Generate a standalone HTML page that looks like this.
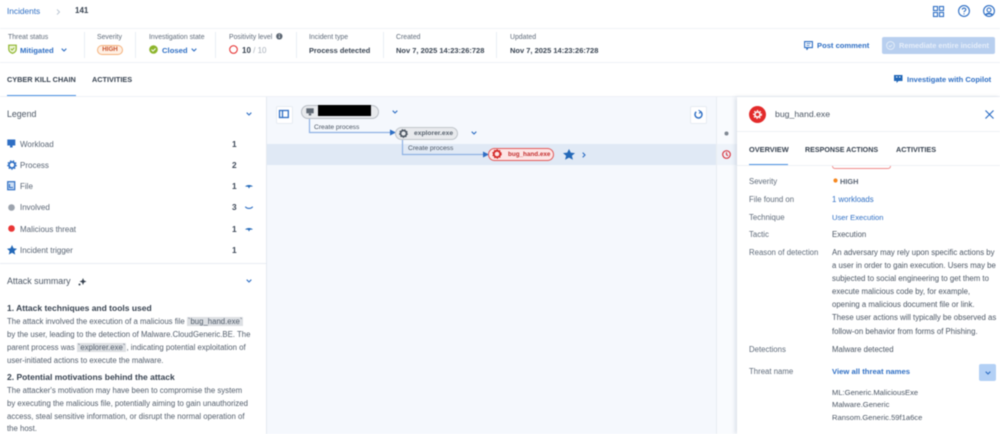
<!DOCTYPE html>
<html><head><meta charset="utf-8">
<style>
html,body{margin:0;padding:0;background:#fff}
#p{position:relative;width:1000px;height:434px;overflow:hidden;background:#fff;font-family:"Liberation Sans",sans-serif;color:#3b4656;filter:blur(.4px)}
#p div{position:absolute}
.t{white-space:nowrap;font-size:8px;line-height:14px}
.l{color:#5f6b7a;font-size:6.9px}
.b{color:#2f6fc4}
.v{color:#3a4553;font-weight:bold;font-size:7.5px}
.h{font-weight:bold;color:#36414f;font-size:7.3px}
.sep{width:1px;height:26px;top:32px;background:#e9eef5}
.k{color:#5f6b7a;font-size:7.8px}
.r{color:#4b5664;font-size:7.8px}
.e{color:#5a6574;font-size:8px}
.n{font-size:8.3px;font-weight:bold;left:232px}
.s{color:#525d6b;font-size:7.8px;left:7px}
.g{color:#36414f;font-weight:bold;font-size:8.5px;left:7px}
.code{background:#dcdfe3;padding:0 1px}
svg{position:absolute;overflow:visible}
</style></head><body><div id="p">

<!-- top -->
<div class="t b" style="left:7px;top:4px;font-size:8.3px">Incidents</div>
<svg style="left:56px;top:9px" width="5" height="6" fill="none" stroke="#bcc7d4"><path d="M1 .5L3.500 3 1 5.500"/></svg>
<div class="t" style="left:75px;top:4px;font-size:8px;font-weight:bold;color:#36414f">141</div>
<svg style="left:933px;top:6px" width="11" height="11" fill="none" stroke="#2f6fc4" stroke-width="1.100"><rect x=".5" y=".5" width="4" height="4"/><rect x="6.500" y=".5" width="4" height="4"/><rect x=".5" y="6.500" width="4" height="4"/><rect x="6.500" y="6.500" width="4" height="4"/></svg>
<svg style="left:958px;top:5px" width="12" height="12" fill="none" stroke="#2f6fc4" stroke-width="1.100"><circle cx="6" cy="6" r="5.400"/><path d="M4.300 4.600C4.400 2.600 7.800 2.600 7.800 4.600 7.800 6 6 5.800 6 7.300"/><path d="M6 8.400v1"/></svg>
<svg style="left:983px;top:5px" width="12" height="12" fill="none" stroke="#2f6fc4" stroke-width="1.100"><circle cx="6" cy="6" r="5.400"/><circle cx="6" cy="5" r="2"/><path d="M2.800 9.800C4 8.200 8 8.200 9.200 9.800" stroke-width="1.600"/></svg>

<div style="left:0;top:28px;width:1000px;height:1px;background:#f0f3f7"></div>
<div style="left:0;top:62px;width:1000px;height:1px;background:#eef1f6"></div>

<!-- status row -->
<div class="t l" style="left:8px;top:31px">Threat status</div>
<svg style="left:8px;top:44px" width="9" height="10" fill="#eef5d8" stroke="#8db52c" stroke-width="1.200"><path d="M.8 1.200h7.400v4.200C8.200 7.400 6 8.800 4.500 9.300 3 8.800.8 7.400.8 5.400z"/><path d="M2.800 4.700l1.300 1.300 2.200-2.300" stroke-width="1" fill="none"/></svg>
<div class="t b" style="left:20px;top:44px;font-weight:bold;font-size:7.700px">Mitigated</div>
<svg style="left:61px;top:48px" width="6" height="4" fill="none" stroke="#2f6fc4" stroke-width="1.100"><path d="M.7.7L3 3 5.300.7"/></svg>
<div class="sep" style="left:84px"></div>

<div class="t l" style="left:97px;top:31px">Severity</div>
<div class="t" style="left:97px;top:45px;width:24px;height:8px;border:1px solid #f5b27c;border-radius:5px;background:#fff0e4;color:#c8502a;font-size:6.200px;font-weight:bold;line-height:8px;text-align:center">HIGH</div>
<div class="sep" style="left:135px"></div>

<div class="t l" style="left:149px;top:31px">Investigation state</div>
<svg style="left:149px;top:45px" width="9" height="9"><circle cx="4.500" cy="4.500" r="4.300" fill="#8db52c"/><path d="M2.500 4.600l1.500 1.500 2.600-2.600" fill="none" stroke="#fff" stroke-width="1"/></svg>
<div class="t b" style="left:162px;top:44px;font-weight:bold;font-size:7.700px">Closed</div>
<svg style="left:191px;top:48px" width="6" height="4" fill="none" stroke="#2f6fc4" stroke-width="1.100"><path d="M.7.7L3 3 5.300.7"/></svg>
<div class="sep" style="left:215px"></div>

<div class="t l" style="left:229px;top:31px">Positivity level</div>
<svg style="left:276px;top:33px" width="7" height="7"><circle cx="3.300" cy="3.300" r="3.200" fill="#5c6672"/><path d="M3.300 3v2M3.300 1.300v1" stroke="#fff" stroke-width=".9"/></svg>
<svg style="left:229px;top:45px" width="9" height="9" fill="none" stroke="#e63a3a" stroke-width="1.100"><circle cx="4.500" cy="4.500" r="3.800"/></svg>
<div class="t" style="left:242px;top:44px;font-size:8px;font-weight:bold;color:#36414f">10 <span style="color:#aab2bc;font-weight:normal">/ 10</span></div>
<div class="sep" style="left:296px"></div>

<div class="t l" style="left:309px;top:31px">Incident type</div>
<div class="t v" style="left:309px;top:44px;font-size:7.400px">Process detected</div>
<div class="sep" style="left:383px"></div>

<div class="t l" style="left:396px;top:31px">Created</div>
<div class="t v" style="left:396px;top:44px">Nov 7, 2025 14:23:26:728</div>
<div class="sep" style="left:496px"></div>

<div class="t l" style="left:510px;top:31px">Updated</div>
<div class="t v" style="left:510px;top:44px">Nov 7, 2025 14:23:26:728</div>

<svg style="left:804px;top:41px" width="9" height="10" fill="none" stroke="#2f6fc4" stroke-width="1.100"><path d="M.6.6h7.800v6H4L2.800 8.800V6.600H.6z"/><path d="M2.500 2.500h4M2.500 4.500h3" stroke-width=".8"/></svg>
<div class="t b" style="left:817px;top:39px;font-weight:bold;font-size:7.600px">Post comment</div>
<div style="left:882px;top:37px;width:113px;height:17px;background:#b8cfef;border-radius:2px"></div>
<svg style="left:886px;top:41px" width="9" height="9" fill="none" stroke="#e2ecf8"><circle cx="4.500" cy="4.500" r="3.900"/><path d="M2.900 4.600l1.200 1.200 2-2"/></svg>
<div class="t" style="left:899px;top:39px;color:#e6eefa;font-weight:bold;font-size:7.400px">Remediate entire incident</div>

<!-- tabs -->
<div class="t h" style="left:7px;top:73px">CYBER KILL CHAIN</div>
<div class="t h" style="left:92px;top:73px">ACTIVITIES</div>
<div style="left:7px;top:95px;width:69px;height:2px;background:#4a90e2"></div>
<svg style="left:894px;top:74px" width="9" height="10"><path d="M0 1h8.500v6H4.500L2.500 9V7H0z" fill="#2368b8"/><path d="M2 3h1.500M5 3h1.500" stroke="#fff"/></svg>
<div class="t b" style="left:907px;top:73px;font-weight:bold;font-size:7.500px">Investigate with Copilot</div>
<div style="left:0;top:96px;width:1000px;height:1px;background:#eef1f6"></div>

<!-- canvas -->
<div style="left:267px;top:97px;width:470px;height:337px;background:#f5f8fd"></div>
<div style="left:717px;top:97px;width:20px;height:337px;background:#f9fbfe"></div>
<div style="left:267px;top:144px;width:450px;height:21px;background:#e0e9f5"></div>
<div style="left:717px;top:144px;width:20px;height:21px;background:#eef3fa"></div>
<div style="left:266px;top:97px;width:1px;height:337px;background:#e4e9f0"></div>

<div style="left:276px;top:106px;width:15px;height:16px;background:#fff;border:1px solid #e6ebf2;border-radius:2px"></div>
<svg style="left:279px;top:110px" width="10" height="8" fill="none" stroke="#2f6fc4" stroke-width="1.300"><rect x=".5" y=".5" width="8.800" height="7"/><path d="M3.500.5v7"/></svg>

<div style="left:301px;top:105px;width:76px;height:12px;background:#e8eaed;border:1px solid #b9bec5;border-radius:7px"></div>
<svg style="left:306px;top:108px" width="8" height="8"><rect x=".3" y=".3" width="7.400" height="5" fill="#5f6873"/><rect x="2.800" y="5.500" width="2.400" height="2" fill="#5f6873"/></svg>
<div style="left:318px;top:105px;width:53px;height:11px;background:#000"></div>
<svg style="left:392px;top:110px" width="6" height="4" fill="none" stroke="#2f6fc4" stroke-width="1.100"><path d="M.7.7L3 3 5.300.7"/></svg>

<svg style="left:309px;top:119px" width="90" height="16" fill="none" stroke="#8fb2e4" stroke-width="1.200"><path d="M.5 0v13.500H82"/><path d="M81 10.500l6 3-6 3z" fill="#2f6fc4" stroke="none"/></svg>
<div class="t" style="left:314px;top:121px;font-size:6.700px;color:#4a5563">Create process</div>

<div style="left:395px;top:127px;width:61px;height:11px;background:#e8eaed;border:1px solid #c0c5cb;border-radius:7px"></div>
<svg style="left:399px;top:129px" width="9" height="9" fill="none" stroke="#4f5965"><circle cx="4.500" cy="4.500" r="3" stroke-width="1.700"/><circle cx="4.500" cy="4.500" r="4" stroke-width=".8" stroke-dasharray="1.400 1.400"/></svg>
<div class="t" style="left:414px;top:127px;font-size:6.700px;font-weight:bold;color:#59636f">explorer.exe</div>
<svg style="left:471px;top:131px" width="6" height="4" fill="none" stroke="#2f6fc4" stroke-width="1.100"><path d="M.7.7L3 3 5.300.7"/></svg>

<svg style="left:402px;top:140px" width="90" height="16" fill="none" stroke="#8fb2e4" stroke-width="1.200"><path d="M.5 0v14.500H82"/><path d="M81 11.500l6 3-6 3z" fill="#2f6fc4" stroke="none"/></svg>
<div class="t" style="left:408px;top:142px;font-size:6.700px;color:#4a5563">Create process</div>

<div style="left:488px;top:148px;width:64px;height:11px;background:#fde5e5;border:1px solid #e25c5c;border-radius:7px"></div>
<svg style="left:492px;top:149px" width="11" height="11" fill="none" stroke="#d42a2a"><circle cx="5" cy="5" r="3.200" stroke-width="1.800"/><circle cx="5" cy="5" r="4.300" stroke-width=".9" stroke-dasharray="1.400 1.400"/></svg>
<div class="t" style="left:508px;top:148px;font-size:6.300px;font-weight:bold;color:#c43030">bug_hand.exe</div>
<svg style="left:563px;top:149px" width="12" height="11"><path d="M6 0l1.800 3.600 4.200.5-3.100 2.600 1 4L6 8.600 2.100 10.700l1-4L0 4.100l4.200-.5z" fill="#2368b8"/></svg>
<svg style="left:582px;top:152px" width="4" height="6" fill="none" stroke="#2f6fc4" stroke-width="1.100"><path d="M.7.700L3 3 .7 5.300"/></svg>

<div style="left:690px;top:106px;width:15px;height:16px;background:#fff;border:1px solid #e6ebf2;border-radius:2px"></div>
<svg style="left:694px;top:110px" width="9" height="9" fill="none" stroke="#2f6fc4" stroke-width="1.500"><path d="M6.500 1.600A3.500 3.500 0 1 1 2.200 1.800"/><path d="M4.500.2l2.300 1.300-1.700 2" stroke-width="1"/></svg>
<div style="left:716px;top:97px;width:1px;height:337px;background:#e9edf3"></div>
<svg style="left:724px;top:131px" width="5" height="5"><circle cx="2.500" cy="2.500" r="2" fill="#7f8893"/></svg>
<svg style="left:722px;top:150px" width="9" height="9" fill="none" stroke="#d93a45" stroke-width="1.200"><circle cx="4.500" cy="4.500" r="3.800"/><path d="M4.500 2.300v2.400l1.500 1"/></svg>

<!-- right panel -->
<div style="left:737px;top:97px;width:263px;height:337px;background:#fff;box-shadow:-2px 0 4px rgba(90,110,140,.18)"></div>
<svg style="left:749px;top:106px" width="17" height="17"><circle cx="8.500" cy="8.500" r="8.500" fill="#e32b2b"/><circle cx="8.500" cy="8.500" r="2.600" fill="none" stroke="#fff" stroke-width="1.600"/><circle cx="8.500" cy="8.500" r="4" fill="none" stroke="#fff" stroke-width="1" stroke-dasharray="1.500 1.500"/></svg>
<div class="t" style="left:775px;top:107px;font-size:8.700px;color:#4b5664">bug_hand.exe</div>
<svg style="left:985px;top:110px" width="9" height="9" fill="none" stroke="#2f6fc4" stroke-width="1.200"><path d="M.5.500l8 8M8.500.500l-8 8"/></svg>
<div style="left:737px;top:131px;width:263px;height:1px;background:#eef1f5"></div>
<div class="t h" style="left:749px;top:143px;font-size:7.400px">OVERVIEW</div>
<div class="t h" style="left:805px;top:143px;font-size:7.100px">RESPONSE ACTIONS</div>
<div class="t h" style="left:896px;top:143px">ACTIVITIES</div>
<div style="left:749px;top:164px;width:39px;height:2px;background:#4a90e2"></div>
<div style="left:737px;top:165px;width:263px;height:1px;background:#eef1f5"></div>
<div style="left:832px;top:166px;width:59px;height:3px;border:1px solid #ef8b8b;border-top:0;border-radius:0 0 3px 3px;box-sizing:border-box"></div>

<div class="t k" style="left:749px;top:175px">Severity</div>
<svg style="left:833px;top:178px" width="5" height="5"><circle cx="2.500" cy="2.500" r="2.100" fill="#f5871f"/></svg>
<div class="t" style="left:840px;top:175px;font-size:7.400px;font-weight:bold;color:#5a6574">HIGH</div>
<div class="t k" style="left:749px;top:193px">File found on</div>
<div class="t b" style="left:832px;top:193px;font-size:7.800px">1 workloads</div>
<div class="t k" style="left:749px;top:211px">Technique</div>
<div class="t b" style="left:832px;top:211px;font-size:7.600px">User Execution</div>
<div class="t k" style="left:749px;top:228px">Tactic</div>
<div class="t r" style="left:832px;top:228px">Execution</div>
<div class="t k" style="left:749px;top:246px">Reason of detection</div>
<div class="t r" style="left:832px;top:246px">An adversary may rely upon specific actions by</div>
<div class="t r" style="left:832px;top:259px">a user in order to gain execution. Users may be</div>
<div class="t r" style="left:832px;top:272px">subjected to social engineering to get them to</div>
<div class="t r" style="left:832px;top:285px">execute malicious code by, for example,</div>
<div class="t r" style="left:832px;top:298px">opening a malicious document file or link.</div>
<div class="t r" style="left:832px;top:311px">These user actions will typically be observed as</div>
<div class="t r" style="left:832px;top:325px">follow-on behavior from forms of Phishing.</div>
<div class="t k" style="left:749px;top:343px">Detections</div>
<div class="t r" style="left:832px;top:343px">Malware detected</div>
<div class="t k" style="left:749px;top:365px">Threat name</div>
<div class="t b" style="left:832px;top:365px;font-size:7.700px;font-weight:bold">View all threat names</div>
<div style="left:979px;top:364px;width:17px;height:17px;background:#b3d0f5;border-radius:2px"></div>
<svg style="left:985px;top:371px" width="6" height="4" fill="none" stroke="#2f6fc4" stroke-width="1.100"><path d="M.7.7L3 3 5.300.7"/></svg>
<div class="t r" style="left:832px;top:386px;font-size:7.600px">ML:Generic.MaliciousExe</div>
<div class="t r" style="left:832px;top:398px;font-size:7.600px">Malware.Generic</div>
<div class="t r" style="left:832px;top:411px;font-size:7.600px">Ransom.Generic.59f1a6ce</div>

<!-- left legend -->
<div class="t" style="left:7px;top:107px;font-size:8.800px;color:#4b5664">Legend</div>
<svg style="left:246px;top:112px" width="6" height="4" fill="none" stroke="#2f6fc4" stroke-width="1.100"><path d="M.7.7L3 3 5.300.7"/></svg>

<svg style="left:7px;top:139px" width="9" height="10"><rect x=".3" y=".5" width="8" height="6" fill="#2f6fc4"/><rect x="3" y="6.500" width="2.600" height="2" fill="#2f6fc4"/></svg>
<div class="t e" style="left:20px;top:138px">Workload</div>
<div class="t n" style="top:137px">1</div>

<svg style="left:7px;top:160px" width="10" height="10" fill="none" stroke="#2f6fc4"><circle cx="5" cy="5" r="3" stroke-width="1.800"/><circle cx="5" cy="5" r="4.300" stroke-width="1" stroke-dasharray="1.500 1.500"/></svg>
<div class="t e" style="left:20px;top:159px">Process</div>
<div class="t n" style="top:158px">2</div>

<svg style="left:7px;top:181px" width="9" height="10" fill="#cfe0f5" stroke="#2f6fc4" stroke-width="1.200"><rect x=".7" y=".7" width="7" height="8"/><path d="M2.500 3v3.500h3.500" stroke-width="1.100" fill="none"/></svg>
<div class="t e" style="left:20px;top:180px">File</div>
<div class="t n" style="top:179px">1</div>
<svg style="left:245px;top:184px" width="8" height="5"><path d="M0 2.500C2 .5 6 .5 8 2.500L5 2.700 4 4.500 3 2.700z" fill="#2368b8"/></svg>

<svg style="left:8px;top:204px" width="7" height="7"><circle cx="3.500" cy="3.500" r="3.300" fill="#9ca3ad"/></svg>
<div class="t e" style="left:20px;top:201px">Involved</div>
<div class="t n" style="top:200px">3</div>
<svg style="left:245px;top:206px" width="8" height="4" fill="none" stroke="#2f6fc4" stroke-width="1.200"><path d="M.3.700C2 3 6 3 7.700.700"/></svg>

<svg style="left:8px;top:225px" width="7" height="7"><circle cx="3.500" cy="3.500" r="3.300" fill="#e93535"/></svg>
<div class="t e" style="left:20px;top:223px">Malicious threat</div>
<div class="t n" style="top:222px">1</div>
<svg style="left:245px;top:227px" width="8" height="5"><path d="M0 2.500C2 .5 6 .5 8 2.500L5 2.700 4 4.500 3 2.700z" fill="#2368b8"/></svg>

<svg style="left:7px;top:245px" width="10" height="10"><path d="M5 0l1.500 3.300 3.500.4-2.600 2.300.8 3.600L5 7.800 1.800 9.600l.8-3.600L0 3.700l3.500-.4z" fill="#2368b8"/></svg>
<div class="t e" style="left:20px;top:244px">Incident trigger</div>
<div class="t n" style="top:243px">1</div>

<div style="left:0;top:263px;width:266px;height:1px;background:#e9edf3"></div>

<!-- summary -->
<div class="t" style="left:7px;top:274px;font-size:8.900px;color:#4b5664">Attack summary</div>
<svg style="left:78px;top:277px" width="9" height="9"><path d="M5 1l1 2.500L8.500 4.500 6 5.500 5 8 4 5.500 1.500 4.500 4 3.500z" fill="#36414f"/><circle cx="1.500" cy="7.500" r="1" fill="#36414f"/></svg>
<svg style="left:246px;top:279px" width="6" height="4" fill="none" stroke="#2f6fc4" stroke-width="1.100"><path d="M.7.7L3 3 5.300.7"/></svg>

<div class="t g" style="top:301px">1. Attack techniques and tools used</div>
<div class="t s" style="top:315px">The attack involved the execution of a malicious file <span class="code">`bug_hand.exe`</span></div>
<div class="t s" style="top:328px">by the user, leading to the detection of Malware.CloudGeneric.BE. The</div>
<div class="t s" style="top:341px">parent process was <span class="code">`explorer.exe`</span>, indicating potential exploitation of</div>
<div class="t s" style="top:354px">user-initiated actions to execute the malware.</div>
<div class="t g" style="top:370px">2. Potential motivations behind the attack</div>
<div class="t s" style="top:384px">The attacker's motivation may have been to compromise the system</div>
<div class="t s" style="top:397px">by executing the malicious file, potentially aiming to gain unauthorized</div>
<div class="t s" style="top:410px">access, steal sensitive information, or disrupt the normal operation of</div>
<div class="t s" style="top:422px">the host.</div>
</div></body></html>
